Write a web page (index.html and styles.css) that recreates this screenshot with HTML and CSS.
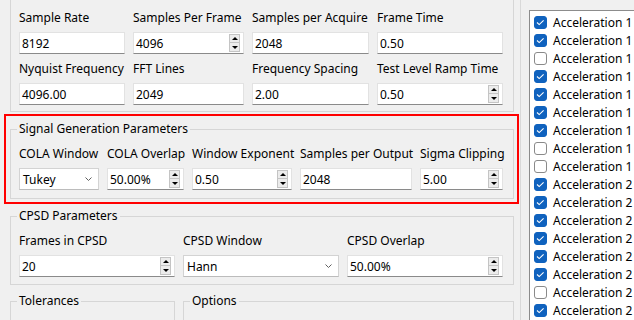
FILE: index.html
```html
<!DOCTYPE html>
<html lang="en">
<head>
    <meta charset="utf-8">
    <title>Test Parameters</title>
    <link rel="stylesheet" href="styles.css">
</head>
<body>
    <div class="window">
        <div class="params">
            <fieldset class="group group-top">
                <div class="grid grid-sampling">
                    <div class="field"><label>Sample Rate</label><div class="edit"><span>8192</span></div></div>
                    <div class="field"><label>Samples Per Frame</label><div class="edit"><span>4096</span><span class="spin"><i class="up"></i><i class="down"></i></span></div></div>
                    <div class="field"><label>Samples per Acquire</label><div class="edit"><span>2048</span></div></div>
                    <div class="field"><label>Frame Time</label><div class="edit"><span>0.50</span></div></div>
                    <div class="field"><label>Nyquist Frequency</label><div class="edit"><span>4096.00</span></div></div>
                    <div class="field"><label>FFT Lines</label><div class="edit"><span>2049</span></div></div>
                    <div class="field"><label>Frequency Spacing</label><div class="edit"><span>2.00</span></div></div>
                    <div class="field"><label>Test Level Ramp Time</label><div class="edit"><span>0.50</span><span class="spin"><i class="up"></i><i class="down"></i></span></div></div>
                </div>
            </fieldset>

            <div class="highlight">
                <fieldset class="group">
                    <legend>Signal Generation Parameters</legend>
                    <div class="grid grid-signal">
                        <div class="field"><label>COLA Window</label><div class="combo"><span>Tukey</span><svg class="chevron" width="7" height="4" viewBox="0 0 7 4"><polyline points="0.5,0.5 3.5,3.5 6.5,0.5" fill="none" stroke="#606060" stroke-width="1"/></svg></div></div>
                        <div class="field"><label>COLA Overlap</label><div class="edit"><span>50.00%</span><span class="spin"><i class="up"></i><i class="down"></i></span></div></div>
                        <div class="field"><label>Window Exponent</label><div class="edit"><span>0.50</span><span class="spin"><i class="up"></i><i class="down"></i></span></div></div>
                        <div class="field"><label>Samples per Output</label><div class="edit"><span>2048</span></div></div>
                        <div class="field"><label>Sigma Clipping</label><div class="edit"><span>5.00</span><span class="spin"><i class="up"></i><i class="down"></i></span></div></div>
                    </div>
                </fieldset>
            </div>

            <fieldset class="group group-cpsd">
                <legend>CPSD Parameters</legend>
                <div class="grid grid-cpsd">
                    <div class="field"><label>Frames in CPSD</label><div class="edit"><span>20</span><span class="spin"><i class="up"></i><i class="down"></i></span></div></div>
                    <div class="field"><label>CPSD Window</label><div class="combo"><span>Hann</span><svg class="chevron" width="7" height="4" viewBox="0 0 7 4"><polyline points="0.5,0.5 3.5,3.5 6.5,0.5" fill="none" stroke="#606060" stroke-width="1"/></svg></div></div>
                    <div class="field"><label>CPSD Overlap</label><div class="edit"><span>50.00%</span><span class="spin"><i class="up"></i><i class="down"></i></span></div></div>
                </div>
            </fieldset>

            <div class="bottom-row">
                <fieldset class="group group-tol">
                    <legend>Tolerances</legend>
                </fieldset>
                <fieldset class="group group-opt">
                    <legend>Options</legend>
                </fieldset>
            </div>
        </div>

        <div class="channels">
            <div class="channel-list">
                <div class="row"><span class="check on"></span>Acceleration 1</div>
                <div class="row"><span class="check on"></span>Acceleration 1</div>
                <div class="row"><span class="check"></span>Acceleration 1</div>
                <div class="row"><span class="check on"></span>Acceleration 1</div>
                <div class="row"><span class="check on"></span>Acceleration 1</div>
                <div class="row"><span class="check on"></span>Acceleration 1</div>
                <div class="row"><span class="check on"></span>Acceleration 1</div>
                <div class="row"><span class="check"></span>Acceleration 1</div>
                <div class="row"><span class="check"></span>Acceleration 1</div>
                <div class="row"><span class="check on"></span>Acceleration 2</div>
                <div class="row"><span class="check on"></span>Acceleration 2</div>
                <div class="row"><span class="check on"></span>Acceleration 2</div>
                <div class="row"><span class="check on"></span>Acceleration 2</div>
                <div class="row"><span class="check on"></span>Acceleration 2</div>
                <div class="row"><span class="check on"></span>Acceleration 2</div>
                <div class="row"><span class="check"></span>Acceleration 2</div>
                <div class="row"><span class="check on"></span>Acceleration 2</div>
            </div>
        </div>
    </div>
</body>
</html>
```

FILE: styles.css
```css
body {
    margin: 0;
    background: #f0f0f0;
    font-family: "Noto Sans", "Segoe UI", sans-serif;
    font-size: 12px;
    color: #000;
    overflow: hidden;
}

.window {
    display: flex;
    height: 320px;
    overflow: hidden;
}

.params {
    width: 504px;
    padding: 0 6px 0 10px;
    border-right: 1px solid #d9d9d9;
    flex: none;
    overflow: hidden;
}

/* group boxes */
.group {
    margin: 0;
    padding: 9px 8px 8px 8px;
    border: 1px solid #d6d6d6;
    min-width: 0;
}

.group legend {
    padding: 0 2px;
    margin-left: -2px;
    line-height: 16px;
}

.group-top {
    border-top: none;
    padding-top: 10px;
    padding-bottom: 6px;
}

.group-cpsd {
    margin-top: 9px;
    padding-bottom: 7px;
}

.highlight {
    position: relative;
    margin-top: 9px;
}

.highlight::after {
    content: "";
    position: absolute;
    left: -6px;
    right: -5px;
    top: -7px;
    bottom: -5px;
    border: 2px solid #ff0000;
    pointer-events: none;
}

.bottom-row {
    display: flex;
    gap: 8px;
    margin-top: 8px;
}

.group-tol {
    width: 147px;
    height: 20px;
    flex: none;
}

.group-opt {
    flex: 1;
    height: 20px;
}

/* field grids */
.grid {
    display: grid;
    column-gap: 8px;
    row-gap: 7px;
}

.grid-sampling {
    grid-template-columns: 106px 111px 117px 126px;
}

.grid-signal {
    grid-template-columns: 80px 77px 100px 112px 83px;
}

.grid-cpsd {
    grid-template-columns: 156px 156px 156px;
}

.field {
    display: flex;
    flex-direction: column;
    gap: 6px;
    min-width: 0;
}

.field label {
    line-height: 16px;
    white-space: nowrap;
}

.edit,
.combo {
    display: flex;
    align-items: center;
    height: 22px;
    box-sizing: border-box;
    background: #fff;
    white-space: nowrap;
}

.edit {
    border: 1px solid #e2e2e2;
    border-bottom-color: #8a8a8a;
    padding: 0 3px 0 2px;
}

.combo {
    border: 1px solid #d3d3d3;
    border-bottom-color: #bcbcbc;
    padding: 0 6px 0 3px;
}

.edit span:first-child,
.combo span {
    flex: 1;
}

.chevron {
    flex: none;
}

/* spin buttons */
.spin {
    display: flex;
    flex-direction: column;
    width: 11px;
    height: 18px;
    flex: none;
}

.spin i {
    display: flex;
    align-items: center;
    justify-content: center;
    height: 9px;
    box-sizing: border-box;
    background: #ececec;
    border: 1px solid #c4c4c4;
}

.spin .down {
    border-top: none;
}

.spin i::after {
    content: "";
    width: 0;
    height: 0;
    border-left: 3px solid transparent;
    border-right: 3px solid transparent;
}

.spin .up::after {
    border-bottom: 3px solid #000;
}

.spin .down::after {
    border-top: 3px solid #000;
}

/* channel list */
.channels {
    flex: 1;
    padding: 10px 0 0 8px;
    overflow: hidden;
}

.channel-list {
    width: 140px;
    height: 320px;
    background: #fff;
    border: 1px solid #8c8c8c;
    padding: 2px 0 0 4px;
}

.row {
    display: flex;
    align-items: center;
    gap: 6px;
    height: 18px;
    white-space: nowrap;
}

.check {
    width: 13px;
    height: 13px;
    box-sizing: border-box;
    border: 1px solid #8a8a8a;
    border-radius: 3px;
    background: #fff;
    flex: none;
}

.check.on {
    border-color: #0f62be;
    background: #0f62be url("data:image/svg+xml,%3Csvg xmlns='http://www.w3.org/2000/svg' width='13' height='13'%3E%3Cpolyline points='3,6.5 5.2,8.6 9.6,4.3' fill='none' stroke='white' stroke-width='1.1'/%3E%3C/svg%3E") no-repeat -1px -1px;
}
```
